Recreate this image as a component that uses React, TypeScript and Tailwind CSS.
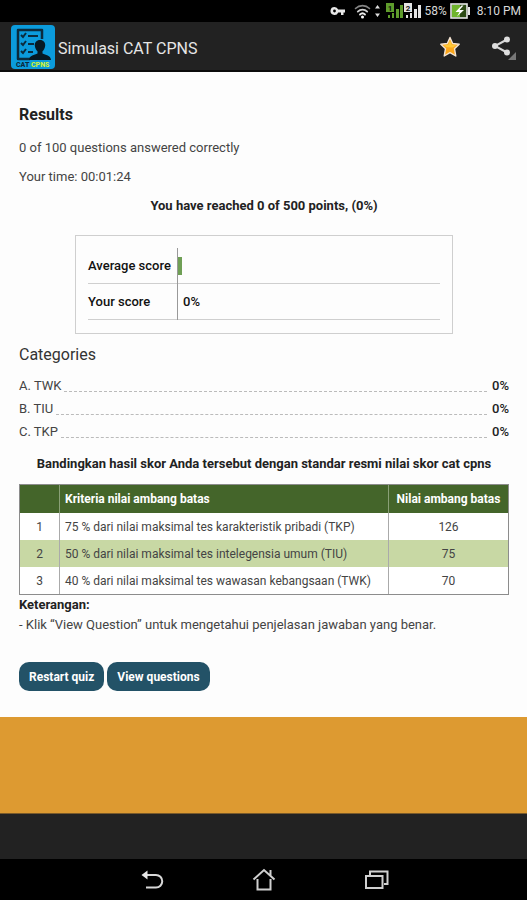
interface Category {
  name: string;
  score: string;
}

interface Threshold {
  no: number;
  label: string;
  value: number;
}

const categories: Category[] = [
  { name: "A. TWK", score: "0%" },
  { name: "B. TIU", score: "0%" },
  { name: "C. TKP", score: "0%" },
];

const thresholds: Threshold[] = [
  { no: 1, label: "75 % dari nilai maksimal tes karakteristik pribadi (TKP)", value: 126 },
  { no: 2, label: "50 % dari nilai maksimal tes intelegensia umum (TIU)", value: 75 },
  { no: 3, label: "40 % dari nilai maksimal tes wawasan kebangsaan (TWK)", value: 70 },
];

function SignalIcon({ sim, green }: { sim: string; green?: boolean }) {
  const color = green ? "#5f9c2c" : "#e4e4e4";
  return (
    <svg width="18" height="18" viewBox="0 0 18 18" aria-hidden="true">
      <rect x="0" y="1" width="8" height="9" fill={color} />
      <text x="4" y="9" fontSize="8" fontWeight="700" textAnchor="middle" fill="#111">
        {sim}
      </text>
      <g fill={color}>
        <rect x="2" y="13" width="2" height="3" />
        <rect x="6" y="11" width="2" height="5" />
        <rect x="10" y="7" width="3" height="9" />
        <rect x="14" y="3" width="3" height="13" />
      </g>
    </svg>
  );
}

function StatusBar() {
  return (
    <div className="flex h-[22px] items-center justify-end bg-black pr-[6px] text-[12px] text-[#d8d8d8]">
      <svg width="16" height="10" viewBox="0 0 16 10" className="mr-2" aria-hidden="true">
        <path
          fill="#e8e8e8"
          fillRule="evenodd"
          d="M4.5 1a4 4 0 1 0 3.7 5.5H11V9h2.500V6.500H15v-3H8.200A4 4 0 0 0 4.500 1Zm0 2.600a1.400 1.400 0 1 1 0 2.800 1.400 1.400 0 0 1 0-2.800Z"
        />
      </svg>
      <svg width="17" height="15" viewBox="0 0 17 15" className="mr-1" aria-hidden="true">
        <g fill="none" strokeLinecap="round">
          <path d="M1.500 4.500a10 10 0 0 1 14 0" stroke="#858585" strokeWidth="1.600" />
          <path d="M3.800 7.600a6.700 6.700 0 0 1 9.400 0" stroke="#d0d0d0" strokeWidth="1.800" />
          <path d="M6 10.500a3.600 3.600 0 0 1 5 0" stroke="#eee" strokeWidth="1.800" />
        </g>
        <circle cx="8.500" cy="13" r="1.500" fill="#fff" />
      </svg>
      <svg width="5" height="12" viewBox="0 0 5 12" className="mr-[6px]" aria-hidden="true">
        <path fill="#ddd" d="M2.500 0 5 3.500H0ZM2.500 12 5 8.500H0Z" />
      </svg>
      <SignalIcon sim="1" green />
      <SignalIcon sim="2" />
      <span className="ml-[3px]">58%</span>
      <svg width="21" height="16" viewBox="0 0 21 16" className="mr-[6px] ml-[3px]" aria-hidden="true">
        <rect x="1" y="1" width="16" height="14" fill="#2c4a14" stroke="#e6e6e6" strokeWidth="1.600" />
        <rect x="2" y="2" width="8" height="12" fill="#6fb52c" />
        <path d="M18 4h2v8h-2z" fill="#e6e6e6" />
        <path d="M11.500 2.500 5.500 9h4L7 13.500 14 7h-4.500l4-4.500Z" fill="#fff" />
      </svg>
      <span>8:10 PM</span>
    </div>
  );
}

function AppLogo() {
  return (
    <svg width="44" height="44" viewBox="0 0 44 44" aria-hidden="true">
      <rect width="44" height="44" rx="4" fill="#0b9bdc" />
      <path d="M19 34H7V5h24v9" fill="none" stroke="#0b2b3d" strokeWidth="2.500" strokeLinejoin="round" />
      <g fill="none" stroke="#0b2b3d" strokeWidth="2">
        <path d="m10 10 2 2 3-4M10 18l2 2 3-4M10 26l2 2 3-4" />
        <path d="M17 11h10M17 19h6M17 27h5" />
      </g>
      <path
        fill="#071923"
        d="M29 15c-3.500 0-5.500 2.500-5.200 5.500.2 2.600 1.200 4.500 2.700 5.700v2.300c-3 1.500-8 1.500-8.500 6.500h22c-.4-5-5.500-5-8.500-6.500v-2.300c1.500-1.200 2.500-3.100 2.700-5.700.3-3-1.700-5.500-5.200-5.500Z"
      />
      <text x="5" y="42" fontSize="7" fontWeight="900" fill="#0b2b3d">
        CAT
      </text>
      <text x="20" y="42" fontSize="7" fontWeight="900" fill="#c8ee3a">
        CPNS
      </text>
    </svg>
  );
}

function AppBar() {
  return (
    <header className="flex h-[50px] items-center border-b-2 border-[#0c0c0c] bg-[#222] pt-px pr-[10px] pl-[11px]">
      <AppLogo />
      <h1 className="ml-[3px] flex-1 pt-1 text-[16px] text-[#e6e6e6]">Simulasi CAT CPNS</h1>
      <button type="button" aria-label="Favorite" className="mr-[29px]">
        <svg width="22" height="22" viewBox="0 0 22 22">
          <path
            d="m11 1.500 2.700 6 6.500.7-4.700 4.500 1.300 7.300-5.800-3.300L5.200 20l1.300-7.300-4.700-4.500 6.500-.7Z"
            fill="#faa61c"
            stroke="#f3e3d2"
            strokeWidth="1.400"
            strokeLinejoin="round"
          />
          <path d="m11 4 1.800 4.700 4.500.5-3.500 2.300-6.500-.3-2.600-2 4.500-.5Z" fill="#ffc838" />
        </svg>
      </button>
      <button type="button" aria-label="Share">
        <svg width="27" height="27" viewBox="0 0 27 27">
          <path d="M17 6.500 5 13l12 6.500" fill="none" stroke="#d6d6d6" strokeWidth="2" />
          <g fill="#dedede">
            <circle cx="17" cy="6.500" r="3" />
            <circle cx="5" cy="13" r="3" />
            <circle cx="17" cy="19.500" r="3" />
          </g>
          <path d="M26 19v8h-8Z" fill="#777" />
        </svg>
      </button>
    </header>
  );
}

function ScoreBox() {
  return (
    <div className="mx-14 mt-[19px] border border-[#cfcfcf] p-3 pb-[13px] font-medium text-[#111]">
      <div className="flex h-9 items-center border-b border-[#cfcfcf]">
        <span className="w-[89px]">Average score</span>
        <div className="flex h-9 flex-1 items-center border-l border-[#999]">
          <div className="h-[18px] w-1 bg-[#6f9f55]" />
        </div>
      </div>
      <div className="flex h-9 items-center border-b border-[#cfcfcf]">
        <span className="w-[89px]">Your score</span>
        <div className="flex h-9 flex-1 items-center border-l border-[#999] pl-[5px]">0%</div>
      </div>
    </div>
  );
}

function NavBar() {
  return (
    <nav className="flex h-[41px] items-center justify-center gap-[88px] bg-black pl-[3px]">
      <button type="button" aria-label="Back">
        <svg width="24" height="24" viewBox="0 0 24 24">
          <path d="M5 7h11a5.800 5.800 0 0 1 0 12.500H6" fill="none" stroke="#d8d8d8" strokeWidth="2" />
          <path d="M7.500 2.500v9L1.500 7Z" fill="#e8e8e8" />
        </svg>
      </button>
      <button type="button" aria-label="Home">
        <svg width="24" height="24" viewBox="0 0 24 24" fill="none" stroke="#d0d0d0" strokeWidth="2">
          <path d="M1.500 11.500 12 2l10.500 9.500M5.500 11v10.500h13V11M18.500 2v6" />
        </svg>
      </button>
      <button type="button" aria-label="Recent apps">
        <svg width="26" height="24" viewBox="0 0 26 24" fill="none" stroke="#d0d0d0" strokeWidth="2">
          <rect x="2" y="8" width="16.500" height="12" />
          <path d="M6 7V3.500h17.500V16H20" />
        </svg>
      </button>
    </nav>
  );
}

export default function App() {
  return (
    <div className="flex min-h-screen flex-col bg-[#222] font-[Roboto,'Liberation_Sans',sans-serif]">
      <StatusBar />
      <AppBar />

      <main className="flex-1 bg-[#fdfdfd] pt-[31px] pr-[18px] pb-[26px] pl-[19px] text-[13px] leading-5 text-[#444]">
        <h2 className="text-[16px] leading-6 font-bold text-[#222]">Results</h2>
        <p className="mt-[11px]">0 of 100 questions answered correctly</p>
        <p className="mt-[9px]">Your time: 00:01:24</p>
        <p className="mt-[9px] text-center font-bold text-[#222]">
          You have reached 0 of 500 points, (0%)
        </p>

        <ScoreBox />

        <h3 className="mt-[9px] text-[16px] leading-6 text-[#333]">Categories</h3>
        <ul className="mt-[7px]">
          {categories.map((category) => (
            <li key={category.name} className="flex h-[23px] items-center">
              <span>{category.name}</span>
              <span className="mr-[5px] ml-[3px] mt-[11px] flex-1 border-b border-dashed border-[#bbb]" />
              <span className="font-medium text-[#222]">{category.score}</span>
            </li>
          ))}
        </ul>

        <p className="mt-[11px] text-center font-bold text-[#222]">
          Bandingkan hasil skor Anda tersebut dengan standar resmi nilai skor cat cpns
        </p>

        <table className="mt-[10px] w-full border-separate border-spacing-0 border border-[#8c8c8c] text-[12px]">
          <thead>
            <tr className="h-7 bg-[#44652a] text-white">
              <th className="w-10 border-r border-[#8aa077]" />
              <th className="border-r border-[#8aa077] px-[5px] text-left font-bold">
                Kriteria nilai ambang batas
              </th>
              <th className="w-[119px] font-bold whitespace-nowrap">Nilai ambang batas</th>
            </tr>
          </thead>
          <tbody>
            {thresholds.map((row) => (
              <tr key={row.no} className="h-[27px] bg-white even:bg-[#c8d8a4]">
                <td className="border-r border-[#aaa] text-center">{row.no}</td>
                <td className="border-r border-[#aaa] px-[5px]">{row.label}</td>
                <td className="text-center">{row.value}</td>
              </tr>
            ))}
          </tbody>
        </table>

        <p className="font-bold text-[#222]">Keterangan:</p>
        <p>- Klik “View Question” untuk mengetahui penjelasan jawaban yang benar.</p>

        <div className="mt-[27px] flex gap-[3px] text-[12px] font-bold text-white">
          <button type="button" className="h-[29px] rounded-[10px] bg-[#235267] px-[10px]">
            Restart quiz
          </button>
          <button type="button" className="h-[29px] rounded-[10px] bg-[#235267] px-[10px]">
            View questions
          </button>
        </div>
      </main>

      <div className="h-[97px] border-b border-[#7a5a2a] bg-[#dd9a31]" />
      <div className="h-[45px] bg-[#222]" />
      <NavBar />
    </div>
  );
}
